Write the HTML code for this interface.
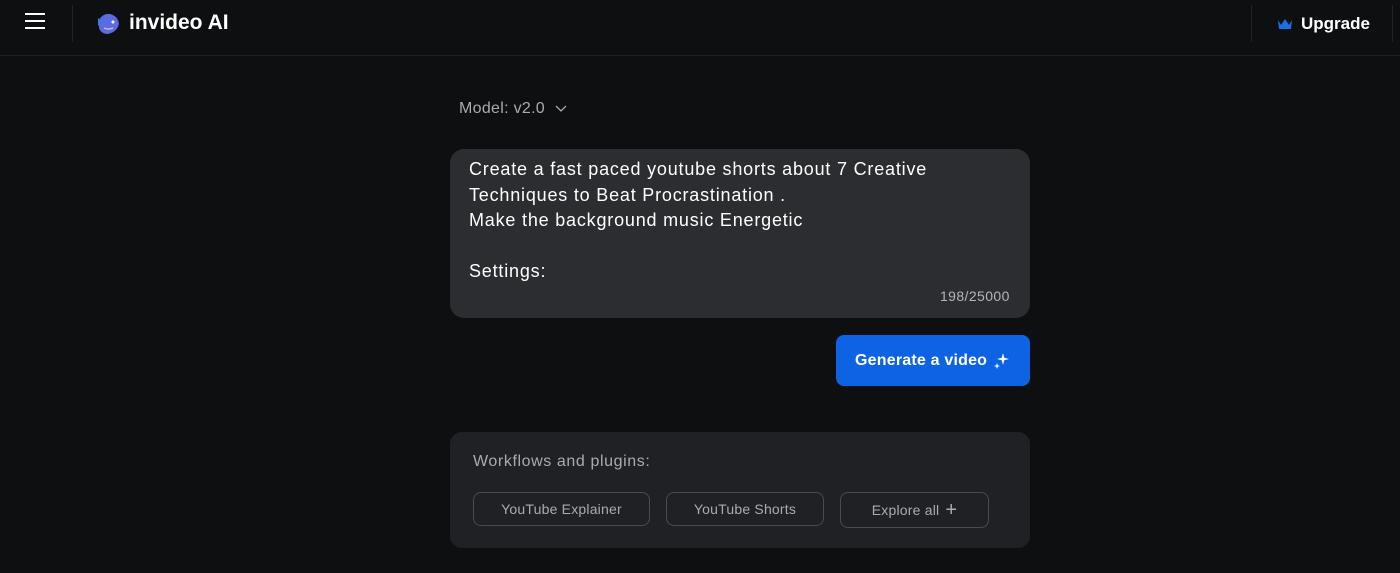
<!DOCTYPE html>
<html><head><style>
*{margin:0;padding:0;box-sizing:border-box}
body{width:1400px;height:573px;background:#0e0f11;font-family:"Liberation Sans",sans-serif;position:relative;overflow:hidden;color:#fff}
.hdr{position:absolute;left:0;top:0;width:1400px;height:56px;border-bottom:1px solid #1f2023}
.abs{position:absolute}
.line{position:absolute;width:1px;background:#222327}
.btn{position:absolute;border:1.5px solid #4a4b50;border-radius:8px;color:#a9abb0;font-size:14px;display:flex;align-items:center;justify-content:center;letter-spacing:0.2px}
</style></head><body>
<div class="hdr"></div>
<div class="abs" style="left:25px;top:13px;width:20px;height:2px;background:#fff"></div>
<div class="abs" style="left:25px;top:20px;width:20px;height:2px;background:#fff"></div>
<div class="abs" style="left:25px;top:27px;width:20px;height:2px;background:#fff"></div>
<div class="line" style="left:72px;top:5px;height:37px"></div>
<svg class="abs" style="left:95px;top:12px" width="25" height="24" viewBox="0 0 25 24"><path d="M4 8 Q8 1 15 2 Q23 4 24 12 Q22 20 13 22 Q6 22 4 16 Z" fill="#5b6be0"/><path d="M3 6 L8 10 L3 14 Z" fill="#3b7ae8"/><circle cx="18" cy="10" r="1.5" fill="#fff"/><path d="M9 16 Q13 18 18 16" stroke="#c9b8ff" stroke-width="1.5" fill="none"/></svg>
<div class="abs" style="left:129px;top:11px;font-size:21px;font-weight:bold">invideo AI</div>
<div class="line" style="left:1251px;top:5px;height:37px"></div>
<div class="line" style="left:1392px;top:5px;height:37px"></div>
<svg class="abs" style="left:1277px;top:18px" width="16" height="12" viewBox="0 0 16 12"><path d="M1 2 L4 7 L8 1 L12 7 L15 2 L14 11 L2 11 Z" fill="#1a6fe8"/></svg>
<div class="abs" style="left:1301px;top:14px;font-size:17px;font-weight:bold">Upgrade</div>
<div class="abs" style="left:459px;top:100px;font-size:16px;color:#a9abb0;letter-spacing:0.3px">Model: v2.0 <svg width="14" height="10" viewBox="0 0 14 10" style="margin-left:4px"><path d="M2 3 L7 8 L12 3" stroke="#a9abb0" stroke-width="1.3" fill="none"/></svg></div>
<div class="abs" style="left:450px;top:149px;width:580px;height:169px;background:#2c2d30;border-radius:14px"></div>
<div class="abs" style="left:469px;top:157px;font-size:18px;line-height:25.5px;color:#fff;letter-spacing:0.8px">Create a fast paced youtube shorts about 7 Creative<br>Techniques to Beat Procrastination .<br>Make the background music Energetic<br><br>Settings:</div>
<div class="abs" style="left:940px;top:288px;font-size:14px;color:#b4b5b9;letter-spacing:0.4px">198/25000</div>
<div class="abs" style="left:836px;top:335px;width:194px;height:51px;background:#0d63e3;border-radius:8px;display:flex;align-items:center;padding-left:19px;font-size:16px;font-weight:bold;letter-spacing:0.2px">Generate a video
<svg width="16" height="18" viewBox="0 0 16 18" style="margin-left:6px"><path d="M10 1 L11.3 5.7 L16 7 L11.3 8.3 L10 13 L8.7 8.3 L4 7 L8.7 5.7 Z" fill="#fff"/><path d="M4 11 L4.8 13.2 L7 14 L4.8 14.8 L4 17 L3.2 14.8 L1 14 L3.2 13.2 Z" fill="#fff"/></svg></div>
<div class="abs" style="left:450px;top:432px;width:580px;height:116px;background:#202124;border-radius:12px"></div>
<div class="abs" style="left:473px;top:453px;font-size:16px;color:#a9abb0;letter-spacing:0.6px">Workflows and plugins:</div>
<div class="btn" style="left:473px;top:492px;width:177px;height:34px">YouTube Explainer</div>
<div class="btn" style="left:666px;top:492px;width:158px;height:34px">YouTube Shorts</div>
<div class="btn" style="left:840px;top:492px;width:149px;height:36px">Explore all <span style="font-size:20px;margin-left:6px;font-weight:300">+</span></div>
</body></html>
